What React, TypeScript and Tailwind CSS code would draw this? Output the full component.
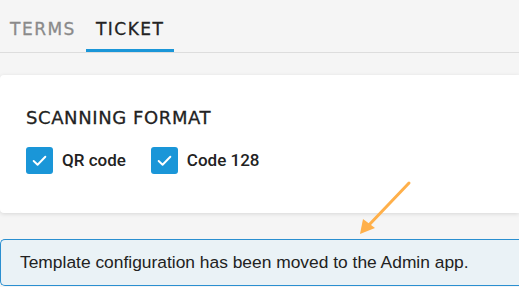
import React from 'react';

const heading = { fontFamily: '"DejaVu Sans", "Open Sans", sans-serif' };

function Check() {
  return (
    <span className="flex h-[27px] w-[27px] items-center justify-center rounded-[3px] bg-[#1a96d8]">
      <svg width="17" height="17" viewBox="0 0 16 16" fill="none">
        <path d="M2.5 8.5 L6.2 12 L13.5 4.5" stroke="white" strokeWidth="1.8" strokeLinecap="round" strokeLinejoin="round" />
      </svg>
    </span>
  );
}

export default function App() {
  return (
    <div className="relative h-[287px] w-[519px] overflow-hidden bg-[#f5f5f5]">
      <div className="flex h-[53px] items-end border-b border-[#dddddd]" style={heading}>
        <div className="border-b-[3px] border-transparent px-[10px] pb-[8px] text-[17px] leading-[24px] tracking-[1.5px] text-[#8a8a8a] [-webkit-text-stroke:0.3px_#8a8a8a]">
          TERMS
        </div>
        <div className="border-b-[3px] border-[#1a96d8] px-[10px] pb-[8px] text-[17px] leading-[24px] tracking-[1.5px] text-[#222] [-webkit-text-stroke:0.3px_#222]">
          TICKET
        </div>
      </div>

      <div className="mt-[22px] h-[138px] rounded-l-[4px] bg-white pl-[26px] pt-[31px] shadow-[0_1px_4px_rgba(0,0,0,0.12)]">
        <div
          className="text-[18px] leading-[24px] tracking-[0.6px] text-[#222] [-webkit-text-stroke:0.3px_#222]"
          style={heading}
        >
          SCANNING FORMAT
        </div>
        <div className="mt-[17px] flex items-center gap-[25px]" style={{ fontFamily: 'Roboto, sans-serif' }}>
          <label className="flex items-center gap-[9px] text-[17px] font-medium text-[#222]">
            <Check />
            QR code
          </label>
          <label className="flex items-center gap-[9px] text-[17px] font-medium text-[#222]">
            <Check />
            Code 128
          </label>
        </div>
      </div>

      <div
        className="mt-[26px] flex h-[47px] items-center rounded-l-[5px] border border-r-0 border-[#2a8fd0] bg-[#eaf2f6] pl-[19px] text-[17.4px] text-[#222]"
        style={{ fontFamily: '"Liberation Sans", Arial, sans-serif' }}
      >
        Template configuration has been moved to the Admin app.
      </div>

      <svg className="pointer-events-none absolute left-0 top-0" width="519" height="287">
        <line x1="409" y1="183" x2="368" y2="226" stroke="#ffb04a" strokeWidth="3" strokeLinecap="round" />
        <polygon points="360,234 363,219 375,228" fill="#ffb04a" />
      </svg>
    </div>
  );
}
